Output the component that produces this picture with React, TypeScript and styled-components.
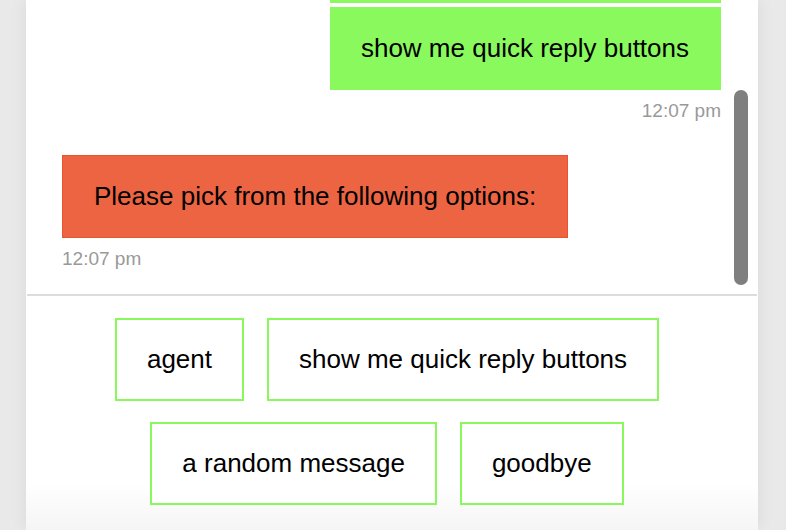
import React from "react";
import styled, { createGlobalStyle } from "styled-components";

const GlobalStyle = createGlobalStyle`
  html, body {
    margin: 0;
    padding: 0;
    height: 100%;
    background: #e9e9e9;
    font-family: "Liberation Sans", Arial, sans-serif;
    overflow: hidden;
  }
  #root { height: 100%; }
`;

const Page = styled.div`
  height: 100vh;
  display: flex;
  justify-content: flex-start;
  padding-left: 26px;
  box-sizing: border-box;
`;

const Panel = styled.div`
  width: 732px;
  height: 100%;
  display: flex;
  flex-direction: column;
  background: #fff;
  box-shadow: 0 0 16px rgba(0, 0, 0, 0.07);
`;

const Messages = styled.div`
  position: relative;
  height: 294px;
  flex: none;
  overflow: hidden;
  display: flex;
  flex-direction: column;
  justify-content: flex-end;
  padding: 0 37px 24px 36px;
  box-sizing: border-box;
`;

const Group = styled.div<{ $mine?: boolean }>`
  display: flex;
  flex-direction: column;
  align-items: ${(p) => (p.$mine ? "stretch" : "flex-start")};
  align-self: ${(p) => (p.$mine ? "flex-end" : "flex-start")};
  gap: 4px;
  margin-top: ${(p) => (p.$mine ? "0" : "33px")};
  flex: none;
`;

const Bubble = styled.div<{ $mine?: boolean }>`
  font-size: 26px;
  line-height: 29px;
  color: #000;
  padding: ${(p) => (p.$mine ? "26px 31px 26px 30px" : "26px 31px")};
  background: ${(p) => (p.$mine ? "#89f95e" : "#ed6443")};
  border: 1px solid ${(p) => (p.$mine ? "#89f95e" : "#e9542f")};
`;

const EarlierTail = styled.div`
  height: 60px;
  background: #89f95e;
`;

const Time = styled.div`
  font-size: 19px;
  line-height: 22px;
  color: #999;
  margin-top: 6px;
  text-align: right;
`;

const Thumb = styled.div`
  position: absolute;
  right: 10px;
  top: 90px;
  width: 14px;
  height: 195px;
  border-radius: 7px;
  background: #7f7f7f;
`;

const Divider = styled.div`
  height: 2px;
  margin: 0 1px;
  background: #dcdcdc;
  flex: none;
`;

const Replies = styled.div`
  flex: 1;
  display: flex;
  flex-wrap: wrap;
  justify-content: center;
  align-content: flex-start;
  gap: 21px 23px;
  padding: 22px 10px 0 0;
  background: linear-gradient(to bottom, #fff 0%, #fff 80%, #f5f5f5 100%);
`;

const ReplyButton = styled.button`
  font-family: "Liberation Sans", Arial, sans-serif;
  font-size: 26px;
  line-height: 31px;
  color: #000;
  background: #fff;
  border: 2px solid #88f85c;
  border-radius: 0;
  padding: 24px 30px;
  margin: 0;
  cursor: pointer;
`;

const replies = ["agent", "show me quick reply buttons", "a random message", "goodbye"];

export default function App() {
  return (
    <>
      <GlobalStyle />
      <Page>
        <Panel>
          <Messages>
            <Group $mine>
              <EarlierTail aria-hidden="true" />
              <Bubble $mine>show me quick reply buttons</Bubble>
              <Time>12:07 pm</Time>
            </Group>
            <Group>
              <Bubble>Please pick from the following options:</Bubble>
              <Time>12:07 pm</Time>
            </Group>
            <Thumb />
          </Messages>
          <Divider />
          <Replies>
            {replies.map((r) => (
              <ReplyButton key={r}>{r}</ReplyButton>
            ))}
          </Replies>
        </Panel>
      </Page>
    </>
  );
}
